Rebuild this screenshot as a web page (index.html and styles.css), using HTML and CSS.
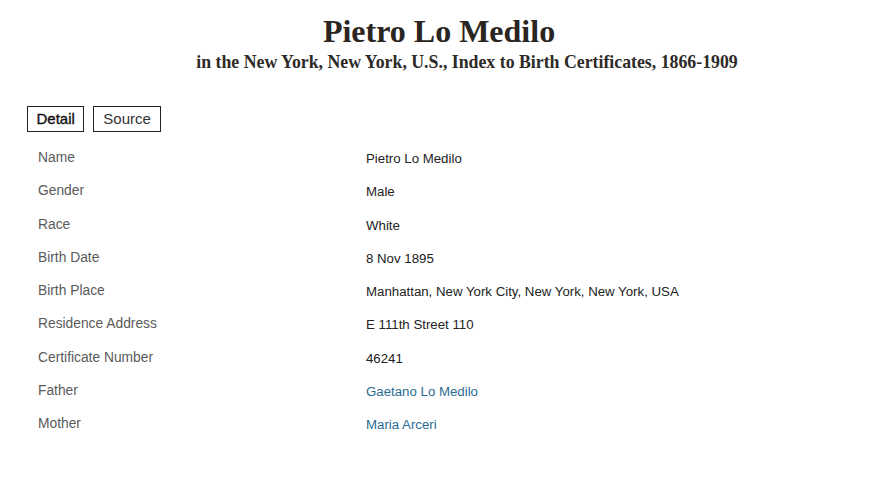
FILE: index.html
```html
<!DOCTYPE html>
<html>
<head>
<meta charset="utf-8">
<link rel="stylesheet" href="styles.css">
</head>
<body>
<header class="head">
  <h1 class="title">Pietro Lo Medilo</h1>
  <p class="subtitle">in the New York, New York, U.S., Index to Birth Certificates, 1866-1909</p>
</header>
<nav class="tabs">
  <span class="tab tab-active">Detail</span>
  <span class="tab">Source</span>
</nav>
<dl class="facts">
  <dt>Name</dt><dd>Pietro Lo Medilo</dd>
  <dt>Gender</dt><dd>Male</dd>
  <dt>Race</dt><dd>White</dd>
  <dt>Birth Date</dt><dd>8 Nov 1895</dd>
  <dt>Birth Place</dt><dd>Manhattan, New York City, New York, New York, USA</dd>
  <dt>Residence Address</dt><dd>E 111th Street 110</dd>
  <dt>Certificate Number</dt><dd>46241</dd>
  <dt>Father</dt><dd><a class="link" href="#">Gaetano Lo Medilo</a></dd>
  <dt>Mother</dt><dd><a class="link" href="#">Maria Arceri</a></dd>
</dl>
</body>
</html>
```
FILE: styles.css
```css
html, body { margin: 0; padding: 0; background: #fff; }
body { width: 886px; font-family: "Liberation Sans", Arial, sans-serif; color: #222; }
.head { padding-top: 12px; text-align: center; }
.title {
  margin: 0;
  font-family: "Liberation Serif", "Times New Roman", serif;
  font-weight: bold;
  font-size: 32px;
  line-height: 38px;
  color: #2a2520;
  padding-right: 8px;
}
.subtitle {
  margin: 0;
  font-family: "Liberation Serif", "Times New Roman", serif;
  font-weight: bold;
  font-size: 17.8px;
  line-height: 24px;
  color: #2e2a26;
  padding-left: 48px;
}
.tabs { display: flex; gap: 9px; padding: 32px 0 0 27px; }
.tab {
  border: 1px solid #222;
  font-size: 15px;
  line-height: 24px;
  padding: 0 9px;
  color: #333;
}
.tab-active { color: #111; padding: 0 8.5px; -webkit-text-stroke: 0.35px #111; }
.facts {
  display: grid;
  grid-template-columns: 328px 1fr;
  grid-auto-rows: 33.25px;
  margin: 14px 0 0 38px;
}
.facts dt { color: #5a5a5a; margin: 0; font-size: 13.8px; line-height: 16px; padding-top: 4px; }
.facts dd { color: #222; margin: 0; font-size: 13.25px; line-height: 16px; padding-top: 5px; }
.link { color: #2a6b92; text-decoration: none; }
```
